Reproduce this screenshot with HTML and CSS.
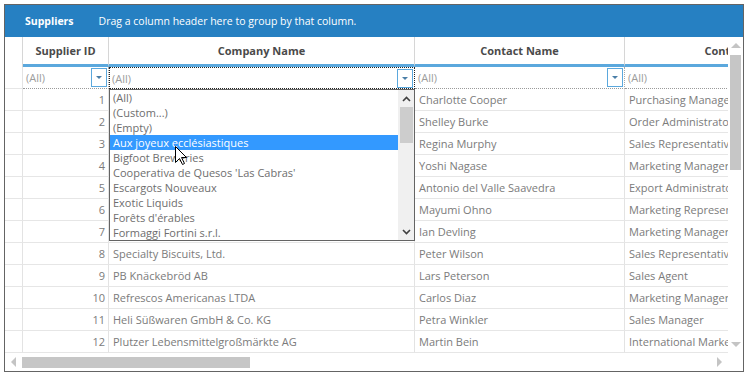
FILE: index.html
```html
<!DOCTYPE html>
<html lang="en">
<head>
  <meta charset="UTF-8" />
  <title>Suppliers</title>
  <link rel="stylesheet" href="styles.css">
</head>
<body>
  <div class="grid">
    <div class="group-bar">
      <span class="title">Suppliers</span>
      <span class="hint">Drag a column header here to group by that column.</span>
    </div>

    <div class="body">
      <div class="viewport">
        <div class="row head">
          <div class="cell ind"></div>
          <div class="cell c-id">Supplier ID</div>
          <div class="cell c-co">Company Name</div>
          <div class="cell c-ct">Contact Name</div>
          <div class="cell c-ti">Contact Title</div>
        </div>

        <div class="row filter">
          <div class="cell ind"></div>
          <div class="cell c-id"><span>(All)</span><span class="drop-btn"></span></div>
          <div class="cell c-co focused"><span>(All)</span><span class="drop-btn"></span></div>
          <div class="cell c-ct"><span>(All)</span><span class="drop-btn"></span></div>
          <div class="cell c-ti"><span>(All)</span></div>
        </div>

        <div class="row"><div class="cell ind"></div><div class="cell c-id num">1</div><div class="cell c-co">Exotic Liquids</div><div class="cell c-ct">Charlotte Cooper</div><div class="cell c-ti">Purchasing Manager</div></div>
        <div class="row"><div class="cell ind"></div><div class="cell c-id num">2</div><div class="cell c-co">New Orleans Cajun Delights</div><div class="cell c-ct">Shelley Burke</div><div class="cell c-ti">Order Administrator</div></div>
        <div class="row"><div class="cell ind"></div><div class="cell c-id num">3</div><div class="cell c-co">Grandma Kelly's Homestead</div><div class="cell c-ct">Regina Murphy</div><div class="cell c-ti">Sales Representative</div></div>
        <div class="row"><div class="cell ind"></div><div class="cell c-id num">4</div><div class="cell c-co">Tokyo Traders</div><div class="cell c-ct">Yoshi Nagase</div><div class="cell c-ti">Marketing Manager</div></div>
        <div class="row"><div class="cell ind"></div><div class="cell c-id num">5</div><div class="cell c-co">Cooperativa de Quesos 'Las Cabras'</div><div class="cell c-ct">Antonio del Valle Saavedra</div><div class="cell c-ti">Export Administrator</div></div>
        <div class="row"><div class="cell ind"></div><div class="cell c-id num">6</div><div class="cell c-co">Mayumi's</div><div class="cell c-ct">Mayumi Ohno</div><div class="cell c-ti">Marketing Representative</div></div>
        <div class="row"><div class="cell ind"></div><div class="cell c-id num">7</div><div class="cell c-co">Pavlova, Ltd.</div><div class="cell c-ct">Ian Devling</div><div class="cell c-ti">Marketing Manager</div></div>
        <div class="row"><div class="cell ind"></div><div class="cell c-id num">8</div><div class="cell c-co">Specialty Biscuits, Ltd.</div><div class="cell c-ct">Peter Wilson</div><div class="cell c-ti">Sales Representative</div></div>
        <div class="row"><div class="cell ind"></div><div class="cell c-id num">9</div><div class="cell c-co">PB Knäckebröd AB</div><div class="cell c-ct">Lars Peterson</div><div class="cell c-ti">Sales Agent</div></div>
        <div class="row"><div class="cell ind"></div><div class="cell c-id num">10</div><div class="cell c-co">Refrescos Americanas LTDA</div><div class="cell c-ct">Carlos Diaz</div><div class="cell c-ti">Marketing Manager</div></div>
        <div class="row"><div class="cell ind"></div><div class="cell c-id num">11</div><div class="cell c-co">Heli Süßwaren GmbH &amp; Co. KG</div><div class="cell c-ct">Petra Winkler</div><div class="cell c-ti">Sales Manager</div></div>
        <div class="row"><div class="cell ind"></div><div class="cell c-id num">12</div><div class="cell c-co">Plutzer Lebensmittelgroßmärkte AG</div><div class="cell c-ct">Martin Bein</div><div class="cell c-ti">International Marketing Mgr.</div></div>
      </div>

      <div class="vscroll">
        <div class="arrow"><span class="tri up"></span></div>
        <div class="thumb"></div>
        <div class="arrow end"><span class="tri down"></span></div>
      </div>

      <div class="hscroll">
        <div class="arrow"><span class="tri left"></span></div>
        <div class="thumb"></div>
        <div class="arrow end"><span class="tri right"></span></div>
      </div>
      <div class="corner"></div>
    </div>

    <!-- open filter list of Company Name -->
    <div class="dropdown">
      <div class="list">
        <div class="item">(All)</div>
        <div class="item">(Custom...)</div>
        <div class="item">(Empty)</div>
        <div class="item selected">Aux joyeux ecclésiastiques</div>
        <div class="item">Bigfoot Breweries</div>
        <div class="item">Cooperativa de Quesos 'Las Cabras'</div>
        <div class="item">Escargots Nouveaux</div>
        <div class="item">Exotic Liquids</div>
        <div class="item">Forêts d'érables</div>
        <div class="item">Formaggi Fortini s.r.l.</div>
      </div>
      <div class="dd-scroll">
        <div class="chev">
          <svg width="9" height="6" viewBox="0 0 9 6"><polyline points="1,5 4.5,1.5 8,5" fill="none" stroke="#404040" stroke-width="1.6"/></svg>
        </div>
        <div class="dd-thumb"></div>
        <div class="chev end">
          <svg width="9" height="6" viewBox="0 0 9 6"><polyline points="1,1 4.5,4.5 8,1" fill="none" stroke="#404040" stroke-width="1.6"/></svg>
        </div>
      </div>
    </div>

    <svg class="cursor" width="13" height="20" viewBox="0 0 13 20">
      <polygon points="0.5,0.5 0.5,16.5 4.5,12.5 7.5,18.5 9.5,17.5 6.5,11.5 11.5,11.5" fill="#fff" stroke="#000" stroke-width="1"/>
    </svg>
  </div>
</body>
</html>
```

FILE: styles.css
```css
body {
  margin: 0;
  font-family: "Open Sans", sans-serif;
  font-size: 11px;
  background: #fff;
}
.grid {
  position: relative;
  margin: 4px;
  width: 738px;
  height: 366px;
  border: 1px solid #646464;
  overflow: hidden;
  display: flex;
  flex-direction: column;
}
.group-bar {
  flex: none;
  height: 32px;
  background: #2680c2;
  color: #fff;
  display: flex;
  align-items: center;
  gap: 25px;
  padding-left: 20px;
  font-size: 10.5px;
}
.group-bar .title {
  font-weight: bold;
}
.body {
  flex: 1;
  display: grid;
  grid-template-columns: 1fr 15px;
  grid-template-rows: 1fr 18px;
  min-height: 0;
}
.viewport {
  overflow: hidden;
}
.row {
  display: flex;
  height: 22px;
}
.cell {
  flex: none;
  box-sizing: border-box;
  height: 100%;
  padding: 0 4px;
  border-right: 1px solid #e3e3e3;
  border-bottom: 1px solid #e6e6e6;
  line-height: 21px;
  white-space: nowrap;
  overflow: hidden;
  color: #7b7b7b;
}
.ind { width: 18px; padding: 0; }
.c-id { width: 86px; }
.c-co { width: 306px; }
.c-ct { width: 210px; }
.c-ti { width: 230px; }
.num { text-align: right; padding-right: 3px; }

/* header */
.head {
  height: 30px;
}
.head .cell {
  border-right-color: #d6d6d6;
  border-bottom: 3px solid #5ba8dd;
  text-align: center;
  font-weight: bold;
  color: #4a4a4a;
  font-size: 11px;
  line-height: 28px;
}
.head .ind {
  border-bottom: 0;
}

/* filter row */
.filter .cell {
  display: flex;
  align-items: center;
  justify-content: space-between;
  padding: 0 1px 0 3px;
  color: #9c9c9c;
  border-right: 1px dotted #a8a8a8;
  border-bottom: 1px dotted #9a9a9a;
}
.filter .ind {
  border-right: 1px solid #e3e3e3;
  border-bottom: 1px solid #e6e6e6;
}
.filter .focused {
  border: 1px dotted #222;
  padding-left: 2px;
}
.drop-btn {
  flex: none;
  box-sizing: border-box;
  width: 16px;
  height: 19px;
  border: 1px solid #5ba8dd;
  display: flex;
  align-items: center;
  justify-content: center;
}
.drop-btn::after {
  content: "";
  border-left: 3px solid transparent;
  border-right: 3px solid transparent;
  border-top: 3px solid #4a7fa8;
}

/* scrollbars */
.vscroll {
  display: flex;
  flex-direction: column;
  align-items: center;
}
.vscroll .arrow {
  height: 17px;
  width: 100%;
  display: flex;
  align-items: center;
  justify-content: center;
}
.vscroll .thumb {
  width: 11px;
  height: 115px;
  margin-top: 1px;
  background: #c6c6c6;
}
.hscroll {
  display: flex;
  align-items: center;
}
.hscroll .arrow {
  width: 17px;
  height: 100%;
  display: flex;
  align-items: center;
  justify-content: center;
}
.hscroll .thumb {
  width: 228px;
  height: 11px;
  background: #c6c6c6;
}
.arrow.end {
  margin-top: auto;
  margin-left: auto;
}
.tri {
  width: 0;
  height: 0;
}
.tri.up {
  border-left: 5px solid transparent;
  border-right: 5px solid transparent;
  border-bottom: 5px solid #c4c4c4;
}
.tri.down {
  border-left: 5px solid transparent;
  border-right: 5px solid transparent;
  border-top: 5px solid #c4c4c4;
}
.tri.left {
  border-top: 5px solid transparent;
  border-bottom: 5px solid transparent;
  border-right: 5px solid #c4c4c4;
}
.tri.right {
  border-top: 5px solid transparent;
  border-bottom: 5px solid transparent;
  border-left: 5px solid #c4c4c4;
}

/* filter dropdown list */
.dropdown {
  position: absolute;
  left: 104px;
  top: 84px;
  width: 306px;
  height: 152px;
  box-sizing: border-box;
  border: 1px solid #646464;
  background: #fff;
  display: flex;
}
.list {
  flex: 1;
  overflow: hidden;
}
.item {
  height: 15px;
  line-height: 15px;
  padding-left: 3px;
  color: #6e6e6e;
  white-space: nowrap;
}
.item.selected {
  background: #3399ff;
  color: #fff;
}
.dd-scroll {
  flex: none;
  width: 16px;
  background: #f0f0f0;
  display: flex;
  flex-direction: column;
  align-items: center;
}
.chev {
  height: 17px;
  display: flex;
  align-items: center;
}
.chev.end {
  margin-top: auto;
}
.dd-thumb {
  width: 13px;
  height: 36px;
  background: #cdcdcd;
}
.cursor {
  position: absolute;
  left: 170px;
  top: 141px;
}
```
